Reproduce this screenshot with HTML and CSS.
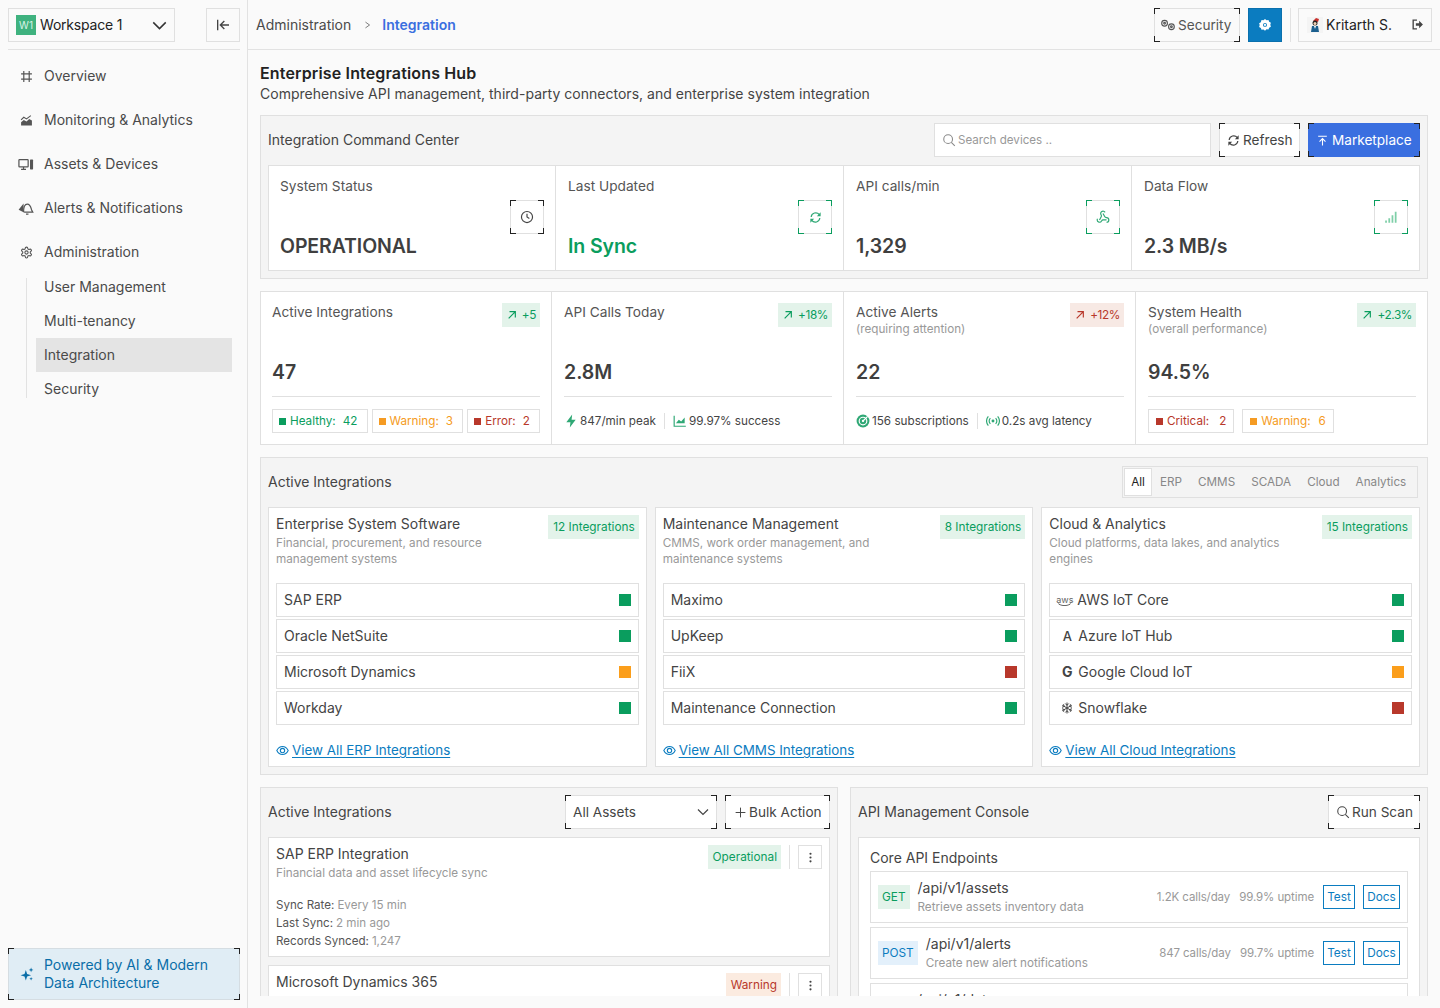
FILE: index.html
```html
<!DOCTYPE html>
<html lang="en">
<head>
<meta charset="utf-8">
<title>Enterprise Integrations Hub</title>
<link rel="stylesheet" href="styles.css">
</head>
<body>
<svg class="sprite" aria-hidden="true">
  <symbol id="i-crop" viewBox="0 0 24 24"><path d="M7 2v20M17 2v20M2 7h20M2 17h20" fill="none" stroke="currentColor" stroke-width="2.200"/></symbol>
  <symbol id="i-chart" viewBox="0 0 24 24"><path d="M2 21v-6l5-4 5 3 5-5 5 3v9z" fill="currentColor"/><path d="M2 11l5-5 5 3 8-6" fill="none" stroke="currentColor" stroke-width="2"/></symbol>
  <symbol id="i-assets" viewBox="0 0 26 24"><rect x="1.500" y="4" width="15" height="12" rx="1" fill="none" stroke="currentColor" stroke-width="2"/><path d="M5 20h8M9 16v4" stroke="currentColor" stroke-width="2"/><rect x="19.500" y="4" width="5" height="16" rx="1" fill="currentColor"/></symbol>
  <symbol id="i-bell" viewBox="0 0 26 24"><path d="M1 14l8-10v14z" fill="currentColor"/><path d="M9 18c0-8 1-13 6-13s6 5 7 9l2 4H10M13 21h4" fill="none" stroke="currentColor" stroke-width="2"/></symbol>
  <symbol id="i-gear" viewBox="0 0 24 24"><path d="M12.220 2h-.44a2 2 0 0 0-2 2v.18a2 2 0 0 1-1 1.730l-.43.25a2 2 0 0 1-2 0l-.15-.08a2 2 0 0 0-2.730.73l-.22.38a2 2 0 0 0 .73 2.730l.15.1a2 2 0 0 1 1 1.720v.51a2 2 0 0 1-1 1.740l-.15.09a2 2 0 0 0-.73 2.730l.22.38a2 2 0 0 0 2.730.73l.15-.08a2 2 0 0 1 2 0l.43.25a2 2 0 0 1 1 1.730V20a2 2 0 0 0 2 2h.44a2 2 0 0 0 2-2v-.18a2 2 0 0 1 1-1.730l.43-.25a2 2 0 0 1 2 0l.15.08a2 2 0 0 0 2.730-.73l.22-.39a2 2 0 0 0-.73-2.730l-.15-.08a2 2 0 0 1-1-1.740v-.5a2 2 0 0 1 1-1.740l.15-.09a2 2 0 0 0 .73-2.730l-.22-.38a2 2 0 0 0-2.730-.73l-.15.08a2 2 0 0 1-2 0l-.43-.25a2 2 0 0 1-1-1.730V4a2 2 0 0 0-2-2z" fill="none" stroke="currentColor" stroke-width="2"/><circle cx="12" cy="12" r="3" fill="none" stroke="currentColor" stroke-width="2"/></symbol>
  <symbol id="i-gearfill" viewBox="0 0 24 24"><path d="M12 1.500l2.600 2.200 3.400-.4 1.100 3.200 3 1.700-1 3.300 1 3.300-3 1.700-1.100 3.200-3.400-.4L12 22l-2.600-2.100-3.400.4-1.100-3.200-3-1.700 1-3.300-1-3.300 3-1.700L6 3.300l3.400.4z" fill="currentColor"/><circle cx="12" cy="11.800" r="3.400" fill="#0b7cc0"/><circle cx="12" cy="11.800" r="1.800" fill="#fff"/></symbol>
  <symbol id="i-chev" viewBox="0 0 24 24"><path d="M2 7l10 10L22 7" fill="none" stroke="currentColor" stroke-width="2.400"/></symbol>
  <symbol id="i-chevr" viewBox="0 0 24 24"><path d="M5 2l14 10L5 22" fill="none" stroke="currentColor" stroke-width="2.600"/></symbol>
  <symbol id="i-collapse" viewBox="0 0 24 24"><path d="M4 4v16M21 12H9M14 6l-6 6 6 6" fill="none" stroke="currentColor" stroke-width="2"/></symbol>
  <symbol id="i-logout" viewBox="0 0 24 24"><path d="M11 4H4v16h7" fill="none" stroke="currentColor" stroke-width="2.500"/><path d="M9 9.500h6V5l7 7-7 7v-4.500H9z" fill="currentColor"/></symbol>
  <symbol id="i-clock" viewBox="0 0 24 24"><circle cx="12" cy="12" r="9.500" fill="none" stroke="currentColor" stroke-width="2"/><path d="M12 6.500V12l4 2.500" fill="none" stroke="currentColor" stroke-width="2"/></symbol>
  <symbol id="i-refresh" viewBox="0 0 24 24"><path d="M4 11a8.500 8.500 0 0 1 15-4.500M20 13a8.500 8.500 0 0 1-15 4.500" fill="none" stroke="currentColor" stroke-width="2.200"/><path d="M21.500 2.500v7h-7zM2.500 21.500v-7h7z" fill="currentColor"/></symbol>
  <symbol id="i-hook" viewBox="0 0 24 24"><g fill="none" stroke="currentColor" stroke-width="2"><path d="M18 16.980h-5.990c-1.100 0-1.950.94-2.480 1.900A4 4 0 0 1 2 17c.01-.7.2-1.400.57-2"/><path d="m6 17 3.130-5.780c.53-.97.1-2.180-.5-3.100a4 4 0 1 1 6.890-4.060"/><path d="m12 6 3.130 5.730C15.660 12.700 16.900 13 18 13a4 4 0 0 1 0 8"/></g></symbol>
  <symbol id="i-signal" viewBox="0 0 24 24"><path d="M2 18h3v4H2zM7.500 14h3v8h-3zM13 9h3v13h-3zM18.500 3h3v19h-3z" fill="currentColor"/></symbol>
  <symbol id="i-search" viewBox="0 0 24 24"><circle cx="10.500" cy="10.500" r="7.500" fill="none" stroke="currentColor" stroke-width="1.800"/><path d="M16 16l6 6" stroke="currentColor" stroke-width="1.800"/></symbol>
  <symbol id="i-upload" viewBox="0 0 24 24"><path d="M4 4h16M12 21V9M6.500 14L12 8.500l5.500 5.500" fill="none" stroke="currentColor" stroke-width="2"/></symbol>
  <symbol id="i-up" viewBox="0 0 24 24"><path d="M4 20L20 4M6 4h14v14" fill="none" stroke="currentColor" stroke-width="2.800"/></symbol>
  <symbol id="i-bolt" viewBox="0 0 24 24"><path d="M14 1L4 14h7l-1 9 10-13h-7z" fill="currentColor"/></symbol>
  <symbol id="i-line" viewBox="0 0 24 24"><path d="M2 3v18h20" fill="none" stroke="currentColor" stroke-width="2"/><path d="M5 16l5-6 4 3 6-7v10H5z" fill="currentColor"/></symbol>
  <symbol id="i-target" viewBox="0 0 24 24"><circle cx="12" cy="12" r="11" fill="currentColor"/><circle cx="12" cy="12" r="6.500" fill="none" stroke="#fff" stroke-width="2"/><circle cx="12" cy="12" r="2" fill="#fff"/><path d="M12 12l8-8" stroke="#fff" stroke-width="2"/></symbol>
  <symbol id="i-live" viewBox="0 0 24 24"><circle cx="12" cy="12" r="2.500" fill="currentColor"/><path d="M7.500 7a7 7 0 0 0 0 10M16.500 7a7 7 0 0 1 0 10M4 4a12 12 0 0 0 0 16M20 4a12 12 0 0 1 0 16" fill="none" stroke="currentColor" stroke-width="2"/></symbol>
  <symbol id="i-eye" viewBox="0 0 24 24"><path d="M1.500 12C4 7 8 4.500 12 4.500S20 7 22.500 12C20 17 16 19.500 12 19.500S4 17 1.500 12z" fill="none" stroke="currentColor" stroke-width="2"/><circle cx="12" cy="12" r="4" fill="none" stroke="currentColor" stroke-width="2"/></symbol>
  <symbol id="i-plus" viewBox="0 0 24 24"><path d="M12 3v18M3 12h18" stroke="currentColor" stroke-width="1.800"/></symbol>
  <symbol id="i-dots" viewBox="0 0 24 24"><circle cx="12" cy="5" r="2" fill="currentColor"/><circle cx="12" cy="12" r="2" fill="currentColor"/><circle cx="12" cy="19" r="2" fill="currentColor"/></symbol>
  <symbol id="i-spark" viewBox="0 0 24 24"><path d="M10 5l2.200 6.800L19 14l-6.800 2.200L10 23l-2.200-6.800L1 14l6.800-2.200zM19 1l1.100 2.900L23 5l-2.900 1.100L19 9l-1.100-2.900L15 5l2.900-1.100zM19 17l.8 2.200L22 20l-2.200.8L19 23l-.8-2.200L16 20l2.200-.8z" fill="currentColor"/></symbol>
  <symbol id="i-snow" viewBox="0 0 24 24"><path d="M12 1v22M2.500 6.500l19 11M21.500 6.500l-19 11M8.500 3L12 6.500 15.500 3M8.500 21l3.500-3.500 3.500 3.500M2 10.500L6.500 9 5 4.500M22 13.500L17.500 15l1.500 4.500M22 10.500L17.500 9 19 4.500M2 13.500L6.500 15 5 19.500" fill="none" stroke="currentColor" stroke-width="2"/></symbol>
</svg>

<div class="app">
  <aside class="sidebar">
    <div class="side-top">
      <button class="workspace"><span class="ws-logo">W1</span><span class="ws-name">Workspace 1</span><svg class="ws-chev"><use href="#i-chev"/></svg></button>
      <button class="collapse"><svg class="ic16"><use href="#i-collapse"/></svg></button>
    </div>
    <nav class="nav">
      <a class="nav-item"><svg class="nav-ic"><use href="#i-crop"/></svg>Overview</a>
      <a class="nav-item"><svg class="nav-ic"><use href="#i-chart"/></svg>Monitoring &amp; Analytics</a>
      <a class="nav-item"><svg class="nav-ic nav-wide"><use href="#i-assets"/></svg>Assets &amp; Devices</a>
      <a class="nav-item"><svg class="nav-ic nav-wide"><use href="#i-bell"/></svg>Alerts &amp; Notifications</a>
      <a class="nav-item"><svg class="nav-ic"><use href="#i-gear"/></svg>Administration</a>
      <div class="subnav">
        <a class="sub-item">User Management</a>
        <a class="sub-item">Multi-tenancy</a>
        <a class="sub-item sub-active">Integration</a>
        <a class="sub-item">Security</a>
      </div>
    </nav>
    <div class="powered corners"><svg class="ic14"><use href="#i-spark"/></svg><span>Powered by AI &amp; Modern Data Architecture</span></div>
  </aside>

  <main class="main">
    <header class="topbar">
      <div class="crumbs"><span>Administration</span><svg class="crumb-sep"><use href="#i-chevr"/></svg><span class="crumb-now">Integration</span></div>
      <div class="top-actions">
        <button class="btn btn-security corners"><svg class="ic-gears" viewBox="0 0 28 24"><g fill="none" stroke="currentColor" stroke-width="2"><circle cx="8" cy="9" r="5"/><circle cx="8" cy="9" r="1.500"/><circle cx="20" cy="15" r="5"/><circle cx="20" cy="15" r="1.500"/></g></svg>Security</button>
        <button class="btn-sq"><svg class="ic14"><use href="#i-gearfill"/></svg></button>
        <span class="v-sep"></span>
        <div class="user">
          <svg class="avatar" viewBox="0 0 16 16"><rect width="16" height="16" fill="#f4f4f4"/><path d="M6 4l3-3 3 1-1 3z" fill="#c8322e"/><circle cx="8" cy="6" r="2.500" fill="#222"/><circle cx="8" cy="6.500" r="1.500" fill="#f3d2b5"/><path d="M4 15l1-6h6l1 6z" fill="#1b5f8e"/><path d="M7 9h2l-1 3z" fill="#fff"/></svg>
          <span class="user-name">Kritarth S.</span>
          <svg class="ic13 user-out"><use href="#i-logout"/></svg>
        </div>
      </div>
    </header>

    <div class="content">
      <h1 class="page-title">Enterprise Integrations Hub</h1>
      <p class="page-sub">Comprehensive API management, third-party connectors, and enterprise system integration</p>

      <section class="panel">
        <div class="panel-head">
          <h2 class="panel-title">Integration Command Center</h2>
          <div class="panel-tools">
            <label class="search"><svg class="ic14"><use href="#i-search"/></svg><span>Search devices ..</span></label>
            <button class="btn btn-white btn-refresh corners"><svg class="ic13"><use href="#i-refresh"/></svg>Refresh</button>
            <button class="btn btn-primary btn-market corners"><svg class="ic13"><use href="#i-upload"/></svg>Marketplace</button>
          </div>
        </div>
        <div class="stats">
          <div class="stat">
            <div class="stat-label">System Status</div>
            <div class="stat-row"><div class="stat-value">OPERATIONAL</div><span class="stat-icon corners"><svg class="ic14"><use href="#i-clock"/></svg></span></div>
          </div>
          <div class="stat">
            <div class="stat-label">Last Updated</div>
            <div class="stat-row"><div class="stat-value green">In Sync</div><span class="stat-icon corners corners-green icon-green"><svg class="ic13"><use href="#i-refresh"/></svg></span></div>
          </div>
          <div class="stat">
            <div class="stat-label">API calls/min</div>
            <div class="stat-row"><div class="stat-value">1,329</div><span class="stat-icon corners corners-green icon-green"><svg class="ic14"><use href="#i-hook"/></svg></span></div>
          </div>
          <div class="stat">
            <div class="stat-label">Data Flow</div>
            <div class="stat-row"><div class="stat-value">2.3 MB/s</div><span class="stat-icon corners corners-green icon-lightgreen"><svg class="ic14"><use href="#i-signal"/></svg></span></div>
          </div>
        </div>
      </section>

      <section class="kpis">
        <div class="kpi">
          <div class="kpi-top">
            <div class="kpi-label">Active Integrations</div>
            <span class="trend"><svg class="ic10"><use href="#i-up"/></svg>+5</span>
          </div>
          <div class="kpi-value">47</div>
          <div class="kpi-foot">
            <span class="chip c-green"><i class="dot"></i>Healthy:<b>42</b></span>
            <span class="chip c-orange"><i class="dot"></i>Warning:<b>3</b></span>
            <span class="chip c-red"><i class="dot"></i>Error:<b>2</b></span>
          </div>
        </div>
        <div class="kpi">
          <div class="kpi-top">
            <div class="kpi-label">API Calls Today</div>
            <span class="trend"><svg class="ic10"><use href="#i-up"/></svg>+18%</span>
          </div>
          <div class="kpi-value">2.8M</div>
          <div class="kpi-foot">
            <span class="meta"><svg class="ic14 icon-green"><use href="#i-bolt"/></svg>847/min peak</span>
            <span class="meta-sep"></span>
            <span class="meta"><svg class="ic14 icon-green"><use href="#i-line"/></svg>99.97% success</span>
          </div>
        </div>
        <div class="kpi">
          <div class="kpi-top">
            <div class="kpi-label">Active Alerts<small>(requiring attention)</small></div>
            <span class="trend trend-red"><svg class="ic10"><use href="#i-up"/></svg>+12%</span>
          </div>
          <div class="kpi-value">22</div>
          <div class="kpi-foot">
            <span class="meta"><svg class="ic14 icon-green"><use href="#i-target"/></svg>156 subscriptions</span>
            <span class="meta-sep"></span>
            <span class="meta"><svg class="ic14 icon-green"><use href="#i-live"/></svg>0.2s avg latency</span>
          </div>
        </div>
        <div class="kpi">
          <div class="kpi-top">
            <div class="kpi-label">System Health<small>(overall performance)</small></div>
            <span class="trend"><svg class="ic10"><use href="#i-up"/></svg>+2.3%</span>
          </div>
          <div class="kpi-value">94.5%</div>
          <div class="kpi-foot kpi-foot-wide">
            <span class="chip chip-crit c-red"><i class="dot"></i>Critical:<b>2</b></span>
            <span class="chip c-orange"><i class="dot"></i>Warning:<b>6</b></span>
          </div>
        </div>
      </section>

      <section class="panel panel-gap">
        <div class="panel-head">
          <h2 class="panel-title">Active Integrations</h2>
          <div class="tabs">
            <span class="tab tab-on">All</span><span class="tab">ERP</span><span class="tab">CMMS</span><span class="tab">SCADA</span><span class="tab">Cloud</span><span class="tab">Analytics</span>
          </div>
        </div>
        <div class="groups">
          <article class="group">
            <div class="group-head">
              <div><h3 class="group-title">Enterprise System Software</h3><p class="group-desc">Financial, procurement, and resource management systems</p></div>
              <span class="tag">12 Integrations</span>
            </div>
            <ul class="rows">
              <li class="row">SAP ERP<i class="sq s-green"></i></li>
              <li class="row">Oracle NetSuite<i class="sq s-green"></i></li>
              <li class="row">Microsoft Dynamics<i class="sq s-orange"></i></li>
              <li class="row">Workday<i class="sq s-green"></i></li>
            </ul>
            <a class="view"><svg class="ic13"><use href="#i-eye"/></svg><span>View All ERP Integrations</span></a>
          </article>
          <article class="group">
            <div class="group-head">
              <div><h3 class="group-title">Maintenance Management</h3><p class="group-desc">CMMS, work order management, and maintenance systems</p></div>
              <span class="tag">8 Integrations</span>
            </div>
            <ul class="rows">
              <li class="row">Maximo<i class="sq s-green"></i></li>
              <li class="row">UpKeep<i class="sq s-green"></i></li>
              <li class="row">FiiX<i class="sq s-red"></i></li>
              <li class="row">Maintenance Connection<i class="sq s-green"></i></li>
            </ul>
            <a class="view"><svg class="ic13"><use href="#i-eye"/></svg><span>View All CMMS Integrations</span></a>
          </article>
          <article class="group">
            <div class="group-head">
              <div><h3 class="group-title">Cloud &amp; Analytics</h3><p class="group-desc">Cloud platforms, data lakes, and analytics engines</p></div>
              <span class="tag">15 Integrations</span>
            </div>
            <ul class="rows">
              <li class="row"><span class="row-name"><span class="logo logo-aws">aws</span>AWS IoT Core</span><i class="sq s-green"></i></li>
              <li class="row"><span class="row-name"><span class="logo">A</span>Azure IoT Hub</span><i class="sq s-green"></i></li>
              <li class="row"><span class="row-name"><span class="logo logo-g">G</span>Google Cloud IoT</span><i class="sq s-orange"></i></li>
              <li class="row"><span class="row-name"><span class="logo"><svg class="ic12"><use href="#i-snow"/></svg></span>Snowflake</span><i class="sq s-red"></i></li>
            </ul>
            <a class="view"><svg class="ic13"><use href="#i-eye"/></svg><span>View All Cloud Integrations</span></a>
          </article>
        </div>
      </section>

      <div class="split">
        <section class="panel panel-fill">
          <div class="panel-head">
            <h2 class="panel-title">Active Integrations</h2>
            <div class="panel-tools">
              <button class="select corners">All Assets<svg class="ic12"><use href="#i-chev"/></svg></button>
              <button class="btn btn-white btn-bulk corners"><svg class="ic13"><use href="#i-plus"/></svg>Bulk Action</button>
            </div>
          </div>
          <div class="items">
            <article class="item">
              <div class="item-top">
                <div><h3 class="group-title">SAP ERP Integration</h3><p class="group-desc">Financial data and asset lifecycle sync</p></div>
                <div class="item-actions"><span class="tag">Operational</span><span class="act-sep"></span><button class="kebab"><svg class="ic13"><use href="#i-dots"/></svg></button></div>
              </div>
              <dl class="facts">
                <div><dt>Sync Rate:</dt><dd>Every 15 min</dd></div>
                <div><dt>Last Sync:</dt><dd>2 min ago</dd></div>
                <div><dt>Records Synced:</dt><dd>1,247</dd></div>
              </dl>
            </article>
            <article class="item">
              <div class="item-top">
                <div><h3 class="group-title">Microsoft Dynamics 365</h3></div>
                <div class="item-actions"><span class="tag tag-warn">Warning</span><span class="act-sep"></span><button class="kebab"><svg class="ic13"><use href="#i-dots"/></svg></button></div>
              </div>
            </article>
          </div>
        </section>

        <section class="panel panel-fill">
          <div class="panel-head">
            <h2 class="panel-title">API Management Console</h2>
            <div class="panel-tools"><button class="btn btn-white btn-run corners"><svg class="ic14"><use href="#i-search"/></svg>Run Scan</button></div>
          </div>
          <div class="api-box">
            <h3 class="api-title">Core API Endpoints</h3>
            <div class="endpoint">
              <span class="method m-get">GET</span>
              <div class="ep-main"><div class="ep-path">/api/v1/assets</div><div class="group-desc">Retrieve assets inventory data</div></div>
              <span class="ep-stat">1.2K calls/day</span><span class="ep-stat">99.9% uptime</span>
              <button class="ep-btn ep-test">Test</button><button class="ep-btn ep-docs">Docs</button>
            </div>
            <div class="endpoint">
              <span class="method m-post">POST</span>
              <div class="ep-main"><div class="ep-path">/api/v1/alerts</div><div class="group-desc">Create new alert notifications</div></div>
              <span class="ep-stat">847 calls/day</span><span class="ep-stat">99.7% uptime</span>
              <button class="ep-btn ep-test">Test</button><button class="ep-btn ep-docs">Docs</button>
            </div>
            <div class="endpoint endpoint-cut">
              <div class="ep-path">/api/v1/data</div>
            </div>
          </div>
        </section>
      </div>
    </div>
  </main>
</div>
</body>
</html>
```

FILE: styles.css
```css
* { box-sizing: border-box; }
html, body { margin: 0; height: 100%; }
body {
  background: #fafafa;
  color: #444;
  font-family: "Inter", "Noto Sans", "Liberation Sans", sans-serif;
  font-size: 14px;
  line-height: 20px;
  overflow: hidden;
}
h1, h2, h3, p, ul, dl, dd { margin: 0; padding: 0; font-weight: 400; }
ul { list-style: none; }
button { font: inherit; color: inherit; background: #fff; cursor: pointer; }
.sprite { display: none; }
svg { display: block; flex: none; }

.ic10 { width: 10px; height: 10px; }
.ic12 { width: 12px; height: 12px; }
.ic13 { width: 13px; height: 13px; }
.ic14 { width: 14px; height: 14px; }
.ic16 { width: 16px; height: 16px; }

.app { display: flex; height: 1008px; }

/* Corner brackets */
.corners { position: relative; --mark: #222; }
.corners::before {
  content: "";
  position: absolute;
  inset: -1px;
  pointer-events: none;
  background:
    linear-gradient(var(--mark), var(--mark)) 0 0 / 6px 1px,
    linear-gradient(var(--mark), var(--mark)) 0 0 / 1px 6px,
    linear-gradient(var(--mark), var(--mark)) 100% 0 / 6px 1px,
    linear-gradient(var(--mark), var(--mark)) 100% 0 / 1px 6px,
    linear-gradient(var(--mark), var(--mark)) 0 100% / 6px 1px,
    linear-gradient(var(--mark), var(--mark)) 0 100% / 1px 6px,
    linear-gradient(var(--mark), var(--mark)) 100% 100% / 6px 1px,
    linear-gradient(var(--mark), var(--mark)) 100% 100% / 1px 6px;
  background-repeat: no-repeat;
}
.corners-green { --mark: #0a9d5e; }

/* Sidebar */
.sidebar {
  width: 248px;
  flex: none;
  border-right: 1px solid #e2e2e2;
  display: flex;
  flex-direction: column;
  padding: 0 7px 8px 8px;
}
.side-top {
  height: 50px;
  display: flex;
  align-items: flex-start;
  justify-content: space-between;
  border-bottom: 1px solid #e2e2e2;
  padding-top: 8px;
}
.workspace {
  width: 167px;
  height: 34px;
  display: flex;
  align-items: center;
  gap: 4px;
  padding: 0 7px;
  border: 1px solid #e0e0e0;
  background: #fafafa;
  color: #222;
}
.ws-logo {
  width: 20px;
  height: 20px;
  background: #3fb27f;
  color: #d9f2e6;
  font-size: 10px;
  display: flex;
  align-items: center;
  justify-content: center;
}
.ws-name { flex: 1; text-align: left; letter-spacing: -.2px; }
.ws-chev { width: 15px; height: 15px; color: #333; }
.collapse {
  width: 34px;
  height: 34px;
  display: flex;
  align-items: center;
  justify-content: center;
  border: 1px solid #e0e0e0;
  background: #fafafa;
  padding: 0;
  color: #444;
}
.nav { flex: 1; padding-top: 4px; display: flex; flex-direction: column; }
.nav-item {
  height: 44px;
  display: flex;
  align-items: center;
  gap: 11px;
  padding-left: 10px;
  color: #4a4a4a;
}
.nav-item .nav-ic { margin-left: 2px; width: 13px; height: 13px; color: #555; }
.nav-item .nav-wide { margin-left: 0; width: 16px; height: 15px; margin-right: -1px; }
.subnav {
  margin: -4px 8px 0 18px;
  background: linear-gradient(#e2e2e2, #e2e2e2) 0 8px / 1px calc(100% - 16px) no-repeat;
  padding: 0 0 0 10px;
  display: flex;
  flex-direction: column;
}
.sub-item { height: 34px; display: flex; align-items: center; padding-left: 8px; color: #4a4a4a; }
.sub-active { background: #e4e4e4; }
.powered {
  height: 52px;
  background: #e0edf5;
  border: 1px solid #d5dde2;
  color: #0a6ea8;
  display: flex;
  align-items: center;
  gap: 10px;
  padding: 0 16px 0 11px;
  line-height: 18px;
}

/* Main */
.main { flex: 1; min-width: 0; display: flex; flex-direction: column; height: 996px; }
.topbar {
  height: 50px;
  flex: none;
  border-bottom: 1px solid #e2e2e2;
  display: flex;
  align-items: center;
  justify-content: space-between;
  padding: 0 8px;
}
.crumbs { display: flex; align-items: center; color: #4a4a4a; }
.crumb-sep { width: 7px; height: 10px; margin: 0 11px 0 13px; color: #555; }
.crumb-now { color: #3a6fe0; font-weight: 600; }
.top-actions { display: flex; align-items: center; gap: 8px; }
.btn {
  height: 34px;
  display: flex;
  align-items: center;
  gap: 3px;
  padding: 0 8px;
  border: 1px solid #e0e0e0;
  background: #fafafa;
  color: #555;
  white-space: nowrap;
  font-size: 13.6px;
}
.btn-security { width: 86px; padding: 0 4px 0 5px; gap: 2px; }
.btn-refresh { width: 81px; padding: 0 7px; }
.btn-market { width: 112px; padding: 0 7px; }
.btn-bulk { width: 105px; gap: 2px; }
.btn-run { width: 92px; padding: 0 7px; gap: 2px; }
.ic-gears { width: 16px; height: 14px; color: #555; }
.btn-white { background: #fff; color: #444; }
.btn-primary { background: #3a6fe0; color: #fff; border-color: #3a6fe0; }
.btn-sq {
  width: 34px;
  height: 34px;
  border: 1px solid #0a70ad;
  background: #0b7cc0;
  color: #fff;
  display: flex;
  align-items: center;
  justify-content: center;
  padding: 0;
}
.v-sep { width: 1px; height: 34px; background: #e2e2e2; margin-right: -1px; }
.user {
  width: 134px;
  height: 34px;
  border: 1px solid #e0e0e0;
  display: flex;
  align-items: center;
  padding: 0 7px 0 8px;
  color: #222;
}
.avatar { width: 16px; height: 16px; margin-right: 3px; }
.user-name { flex: 1; }
.user-out { color: #444; }

.content {
  flex: 1;
  min-height: 0;
  overflow: hidden;
  padding: 13px 12px 0;
}
.page-title { font-size: 16px; font-weight: 600; line-height: 20px; color: #222; letter-spacing: .15px; }
.page-sub { margin: 1px 0 11px; color: #444; line-height: 20px; letter-spacing: .02px; }

.panel { background: #f4f4f4; border: 1px solid #e0e0e0; padding: 0 7px 7px; }
.panel-gap { margin-top: 12px; }
.panel-head {
  height: 49px;
  display: flex;
  align-items: center;
  justify-content: space-between;
  padding-bottom: 1px;
}
.panel-title { font-size: 14px; color: #444; line-height: 20px; }
.panel-tools { display: flex; align-items: center; gap: 8px; }
.search {
  width: 277px;
  height: 34px;
  background: #fff;
  border: 1px solid #e0e0e0;
  display: flex;
  align-items: center;
  gap: 2px;
  padding: 0 7px;
  color: #999;
  font-size: 11.6px;
}
.search svg { color: #888; }

.stats {
  display: grid;
  grid-template-columns: 286px 288px 288px 288px;
  background: #fff;
  border: 1px solid #e0e0e0;
  height: 106px;
}
.stat { padding: 10px 11px 10px 12px; border-left: 1px solid #e0e0e0; }
.stat:first-child { border-left: 0; padding-left: 11px; }
.stat-label { color: #555; font-size: 13.7px; }
.stat-row {
  display: flex;
  justify-content: space-between;
  align-items: flex-end;
  height: 60px;
  margin-top: 4px;
}
.stat-value { font-size: 19.5px; font-weight: 600; line-height: 28px; color: #3f3f3f; letter-spacing: -.1px; }
.green { color: #0a9d5e; }
.stat-icon {
  width: 34px;
  height: 34px;
  align-self: flex-start;
  border: 1px solid #e0e0e0;
  background: #fff;
  display: flex;
  align-items: center;
  justify-content: center;
  color: #444;
}
.icon-green { color: #2fa875; }
.icon-lightgreen { color: #7fcfa8; }

.kpis {
  display: grid;
  grid-template-columns: 290px 292px 292px 292px;
  background: #fff;
  border: 1px solid #e0e0e0;
  margin-top: 12px;
  height: 154px;
}
.kpi { padding: 10px 11px 10px 12px; border-left: 1px solid #e0e0e0; display: flex; flex-direction: column; }
.kpi:first-child { border-left: 0; padding-left: 11px; }
.kpi-top { display: flex; justify-content: space-between; align-items: flex-start; height: 55px; }
.kpi-label { color: #555; line-height: 20px; font-size: 13.7px; }
.kpi-label small { display: block; color: #999; font-size: 11.7px; line-height: 14px; }
.trend {
  height: 24px;
  margin-top: 1px;
  display: flex;
  align-items: center;
  gap: 5px;
  padding: 0 4px 0 5px;
  background: #e3f3ea;
  color: #0a9d5e;
  font-size: 11.8px;
  letter-spacing: -.4px;
}
.trend-red { background: #f7e9e4; color: #b8382b; }
.kpi-value { font-size: 19.5px; font-weight: 600; line-height: 28px; color: #3f3f3f; margin-top: 1px; }
.kpi-foot {
  margin-top: 10px;
  padding-top: 12px;
  border-top: 1px solid #e0e0e0;
  display: flex;
  align-items: center;
  gap: 4px;
  font-size: 11.7px;
  height: 37px;
}
.kpi-foot-wide { gap: 8px; }
.chip {
  height: 24px;
  display: flex;
  align-items: center;
  border: 1px solid #e0e0e0;
  padding: 0 6px;
  white-space: nowrap;
  flex: 1 1 auto;
}
.kpi-foot-wide .chip { flex: none; padding: 0 7px; }
.kpi-foot-wide .chip b { margin-left: 8px; }
.kpi-foot-wide .chip-crit b { margin-left: 10px; }
.chip b { font-weight: 400; margin-left: 7px; }
.dot { width: 7px; height: 7px; margin-right: 4px; background: currentColor; }
.c-green { color: #0a9d5e; }
.c-orange { color: #f59b23; }
.c-red { color: #b8382b; }
.meta { display: flex; align-items: center; gap: 2px; color: #444; white-space: nowrap; }
.meta-sep { width: 1px; height: 16px; background: #e0e0e0; margin: 0 4px; }

.tabs {
  width: 296px;
  height: 32px;
  margin-right: 2px;
  border: 1px solid #e0e0e0;
  padding: 1px;
  display: flex;
  align-items: center;
  font-size: 11.7px;
  color: #888;
}
.tab { padding: 0 8px; height: 28px; display: flex; align-items: center; }
.tab-on { background: #fff; border: 1px solid #e0e0e0; color: #222; width: 28px; padding: 0; justify-content: center; }

.groups { display: grid; grid-template-columns: repeat(3, 1fr); gap: 8px; }
.group { background: #fff; border: 1px solid #e0e0e0; padding: 7px 7px 0; height: 260px; }
.group-head { display: flex; justify-content: space-between; align-items: flex-start; height: 68px; }
.group-title { font-size: 14px; line-height: 18px; color: #444; }
.group-desc { font-size: 11.7px; line-height: 16px; color: #999; margin-top: 2px; max-width: 248px; }
.tag {
  height: 24px;
  display: flex;
  align-items: center;
  padding: 0 4px 0 5px;
  background: #e3f3ea;
  color: #0a9d5e;
  font-size: 11.8px;
  white-space: nowrap;
}
.tag-warn { background: #fbebe0; color: #b8382b; }
.rows { display: flex; flex-direction: column; gap: 2px; }
.row {
  height: 34px;
  border: 1px solid #e0e0e0;
  display: flex;
  align-items: center;
  justify-content: space-between;
  padding: 0 7px;
  color: #444;
}
.row-name { display: flex; align-items: center; }
.logo { width: 20px; margin-right: 1px; display: flex; justify-content: center; font-size: 13px; font-weight: 500; color: #444; }
.logo-aws { font-size: 9px; font-weight: 400; color: #666; line-height: 10px; border-bottom: 1px solid #666; border-radius: 0 0 6px 6px; width: 15px; margin: 0 5px 0 0; }
.logo-g { font-weight: 700; font-size: 14px; }
.sq { width: 12px; height: 12px; }
.s-green { background: #0a9d5e; }
.s-orange { background: #fb9e1b; }
.s-red { background: #b8382b; }
.view {
  margin-top: 15px;
  display: flex;
  align-items: center;
  gap: 3px;
  color: #0b7cc0;
  font-size: 13.4px;
}
.view span { text-decoration: underline; text-underline-offset: 2px; }

.split { display: grid; grid-template-columns: 578px 578px; gap: 12px; margin-top: 12px; }
.panel-fill { padding-bottom: 0; height: 280px; }
.select {
  width: 152px;
  height: 34px;
  display: flex;
  align-items: center;
  justify-content: space-between;
  border: 1px solid #e0e0e0;
  padding: 0 7px;
  background: #fff;
  color: #444;
  font-size: 13.6px;
}
.items { display: flex; flex-direction: column; gap: 8px; }
.item { background: #fff; border: 1px solid #e0e0e0; padding: 7px 7px 6px; }
.item-top { display: flex; justify-content: space-between; align-items: flex-start; }
.item-actions { display: flex; align-items: center; gap: 8px; }
.act-sep { width: 1px; height: 24px; background: #e0e0e0; }
.kebab {
  width: 24px;
  height: 24px;
  border: 1px solid #e0e0e0;
  padding: 0;
  display: flex;
  align-items: center;
  justify-content: center;
  color: #444;
}
.facts { margin-top: 15px; font-size: 11.6px; line-height: 18px; }
.facts div { display: flex; gap: 3px; }
.facts dt { color: #555; }
.facts dd { color: #999; }

.api-box { background: #fff; border: 1px solid #e0e0e0; padding: 10px 11px 0; height: 200px; }
.api-title { font-size: 14px; line-height: 20px; color: #444; margin-bottom: 3px; }
.endpoint {
  height: 52px;
  border: 1px solid #e0e0e0;
  margin-bottom: 4px;
  display: flex;
  align-items: center;
  padding: 0 7px;
}
.endpoint-cut { align-items: flex-start; padding: 7px 7px 0 46px; }
.method { height: 24px; padding: 0 4px; display: flex; align-items: center; font-size: 11.8px; }
.m-get { background: #e3f3ea; color: #0a9d5e; }
.m-post { background: #e3f0fb; color: #0b7cc0; }
.ep-main { flex: 1; margin-left: 8px; margin-top: -1px; }
.ep-path { font-size: 14px; line-height: 18px; color: #444; }
.ep-main .group-desc { margin-top: 2px; }
.ep-stat { font-size: 11.5px; letter-spacing: -.1px; color: #999; margin-right: 9px; white-space: nowrap; }
.ep-btn {
  height: 24px;
  padding: 0;
  border: 1px solid #0b7cc0;
  color: #0b7cc0;
  font-size: 11.8px;
  background: #fff;
  margin-right: 8px;
}
.ep-test { width: 32px; }
.ep-docs { width: 37px; margin-right: 0; }
```
